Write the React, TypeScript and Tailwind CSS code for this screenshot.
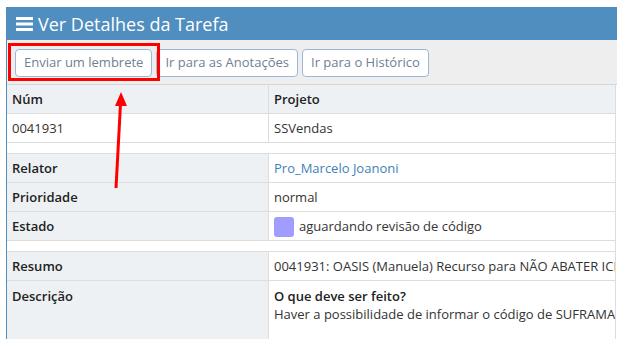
import { FC, ReactNode } from "react";

const font = { fontFamily: '"Open Sans", "Noto Sans", sans-serif' };

type RowProps = {
    label: string;
    children?: ReactNode;
    head?: boolean;
    tall?: boolean;
    plain?: boolean;
};

const Row: FC<RowProps> = ({ label, children, head, tall, plain }) => (
    <div className={`flex border-b border-[#dddddd] ${tall ? "h-[60px]" : "h-[29px]"}`}>
        <div
            className={`w-[262px] shrink-0 border-r border-[#dddddd] px-[5px] pt-[1px] text-[#222] ${
                plain ? "bg-white text-[#333]" : "bg-[#edf1f4] font-semibold"
            } ${tall ? "pt-[6px]" : "flex items-center"}`}
        >
            {label}
        </div>
        <div
            className={`flex-1 overflow-hidden whitespace-nowrap px-[5px] pt-[1px] ${
                head ? "bg-[#edf1f4] font-semibold text-[#222]" : "bg-white text-[#333]"
            } ${tall ? "pt-[6px]" : "flex items-center"}`}
        >
            {children}
        </div>
    </div>
);

const Spacer: FC = () => <div className="h-[11px] border-b border-[#dddddd] bg-white" />;

const Button: FC<{ children: ReactNode }> = ({ children }) => (
    <button className="h-[28px] rounded-[4px] border border-[#9bb8d6] bg-white px-[8px] text-[13px] text-[#6f8193]">
        {children}
    </button>
);

export default function App() {
    return (
        <div className="relative h-[339px] w-[617px] overflow-hidden bg-white pl-[6px] pt-[7px]" style={font}>
            <div className="h-full border-l border-[#4f8fbf]">
                <div className="flex h-[33px] items-center gap-[5px] bg-[#4f8ebf] pl-[9px] text-white">
                    <svg width="17" height="14" viewBox="0 0 17 14" className="mt-[1px]">
                        <rect x="0" y="0" width="17" height="3" fill="white" />
                        <rect x="0" y="5.5" width="17" height="3" fill="white" />
                        <rect x="0" y="11" width="17" height="3" fill="white" />
                    </svg>
                    <span className="text-[18px] leading-none">Ver Detalhes da Tarefa</span>
                </div>
                <div className="flex h-[45px] items-center gap-[4px] border-b border-[#d6d6d6] bg-[#eeeeee] pl-[8px] pt-[1px]">
                    <Button>Enviar um lembrete</Button>
                    <Button>Ir para as Anotações</Button>
                    <Button>Ir para o Histórico</Button>
                </div>
                <div className="mr-[1px] border-r border-[#dddddd] text-[13px]">
                    <Row label="Núm" head>
                        Projeto
                    </Row>
                    <Row label="0041931" plain>
                        SSVendas
                    </Row>
                    <Spacer />
                    <Row label="Relator">
                        <span className="text-[#3f7fb9]">Pro_Marcelo Joanoni</span>
                    </Row>
                    <Row label="Prioridade">normal</Row>
                    <Row label="Estado">
                        <span className="mr-[5px] inline-block h-[20px] w-[20px] rounded-[3px] bg-[#a09dff]" />
                        aguardando revisão de código
                    </Row>
                    <Spacer />
                    <Row label="Resumo">
                        0041931: OASIS (Manuela) Recurso para NÃO ABATER ICMS DO VALOR DO PRODUTO
                    </Row>
                    <Row label="Descrição" tall>
                        <div className="leading-[18px]">
                            <div className="font-semibold text-[#222]">O que deve ser feito?</div>
                            <div>Haver a possibilidade de informar o código de SUFRAMA no cadastro</div>
                        </div>
                    </Row>
                </div>
            </div>

            <div className="pointer-events-none absolute left-[8px] top-[43px] h-[38px] w-[152px] border-[3px] border-[#ff0000]" />
            <svg className="pointer-events-none absolute left-0 top-0" width="617" height="339">
                <line x1="116" y1="188" x2="120.5" y2="104" stroke="#ff0000" strokeWidth="3" />
                <polygon points="121,92 115,106 127,106" fill="#ff0000" />
            </svg>
        </div>
    );
}
